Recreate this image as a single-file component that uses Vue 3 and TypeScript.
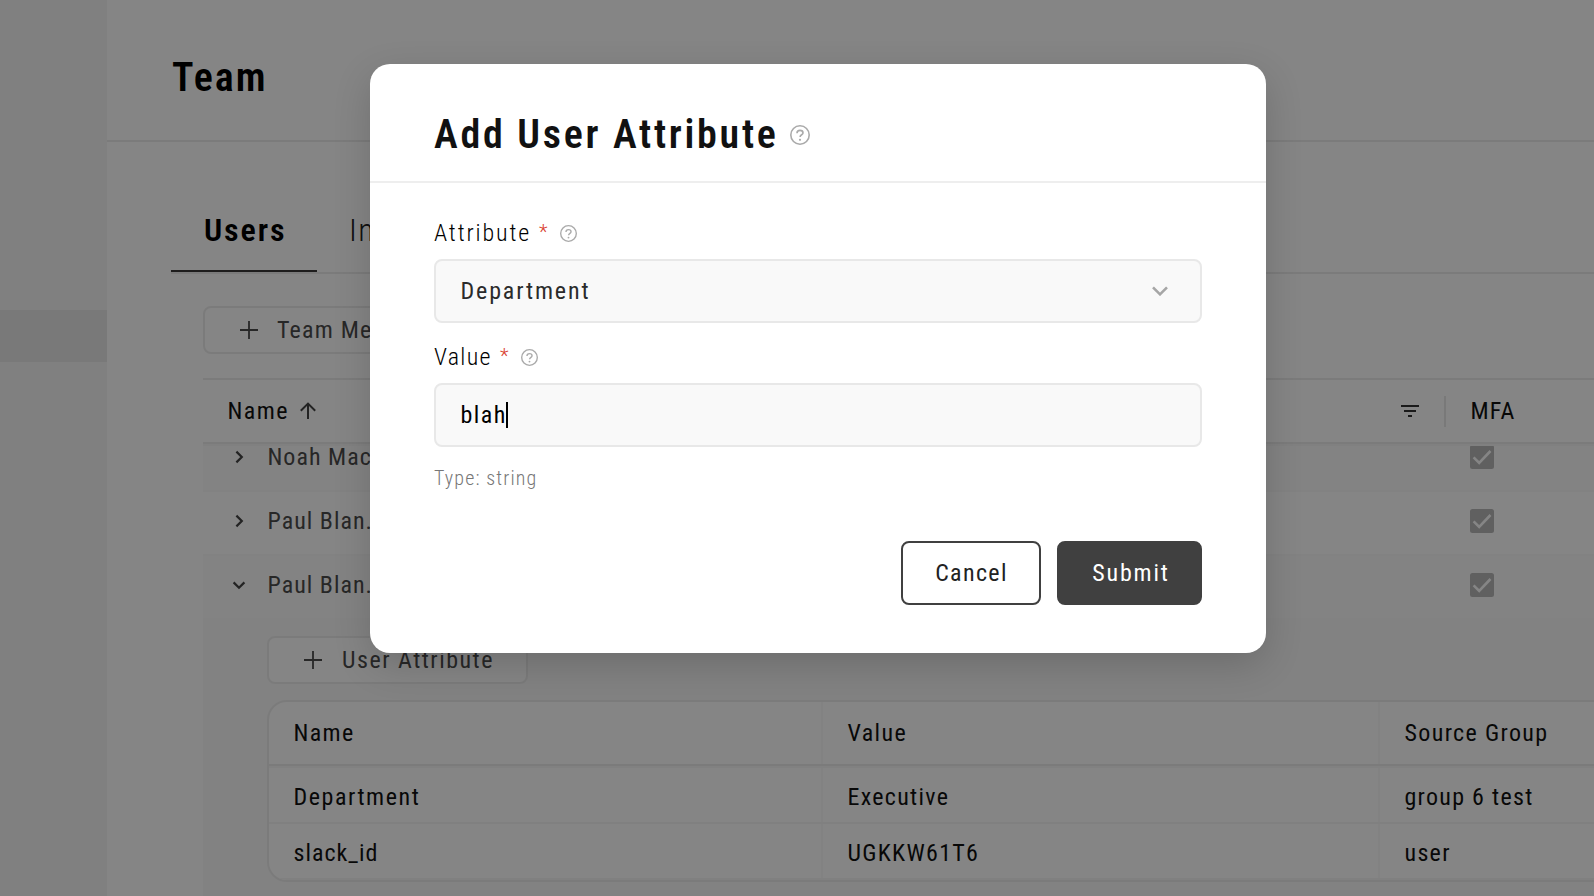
<script setup lang="ts">
interface UserRow { name: string; open: boolean }
interface AttributeRow { name: string; value: string; source: string }

const users: UserRow[] = [
  { name: 'Noah Mac...', open: false },
  { name: 'Paul Blan...', open: false },
  { name: 'Paul Blan...', open: true },
]
const attributes: AttributeRow[] = [
  { name: 'Department', value: 'Executive', source: 'group 6 test' },
  { name: 'slack_id', value: 'UGKKW61T6', source: 'user' },
]
</script>

<template>
  <div class="screen">
    <aside class="sidebar"><div class="active-item"></div></aside>
    <main class="main">
      <header class="page-header"><h1>Team</h1></header>
      <nav class="tabs">
        <span class="tab current">Users</span>
        <span class="tab">Invites</span>
      </nav>
      <section class="content">
        <button class="outline team">
          <svg width="18" height="18" viewBox="0 0 18 18"><path d="M9 0v18M0 9h18" /></svg>
          <span>Team Member</span>
        </button>
        <div class="grid-head">
          <span class="head-name">Name</span>
          <svg class="arrow" width="18" height="18" viewBox="0 0 18 18"><path d="M9 17V2M1.8 8.8 9 1.6l7.2 7.2" /></svg>
          <svg class="filter" width="18" height="14" viewBox="0 0 18 14"><path d="M0 2h18M3 7h12M7 12h4" /></svg>
          <span class="sep"></span>
          <span class="head-mfa">MFA</span>
        </div>
        <div class="grid-body">
          <div class="rows">
            <div v-for="(u, i) in users" :key="i" class="row" :class="{ alt: i % 2 === 0 }">
              <svg class="chev" width="14" height="14" viewBox="0 0 14 14">
                <path :d="u.open ? 'M1.6 4.4 7 9.8l5.4-5.4' : 'M4.4 1.6 9.8 7l-5.4 5.4'" />
              </svg>
              <span class="user-name">{{ u.name }}</span>
              <svg class="check" width="24" height="24" viewBox="0 0 24 24">
                <rect width="24" height="24" rx="2.5" /><path d="m3.6 12.3 5.6 5.6L20.5 6" />
              </svg>
            </div>
          </div>
          <div class="panel">
            <button class="outline">
              <svg width="18" height="18" viewBox="0 0 18 18"><path d="M9 0v18M0 9h18" /></svg>
              <span>User Attribute</span>
            </button>
            <div class="table">
              <div class="tr th"><span>Name</span><span>Value</span><span>Source Group</span></div>
              <div v-for="a in attributes" :key="a.name" class="tr">
                <span :class="a.name.includes('_') ? 'key' : 'label'">{{ a.name }}</span><span>{{ a.value }}</span><span>{{ a.source }}</span>
              </div>
            </div>
          </div>
        </div>
      </section>
    </main>

    <div class="overlay">
      <div class="modal">
        <div class="modal-head">
          <h2>Add User Attribute</h2>
          <svg class="help" width="20" height="20" viewBox="0 0 20 20">
            <circle cx="10" cy="10" r="9.2" /><path d="M7 8.2c0-1.7 1.3-2.8 3-2.8s3 1 3 2.5c0 2-2.9 1.8-2.9 4.1" /><circle class="dot" cx="10" cy="14.8" r="1.1" />
          </svg>
        </div>
        <div class="modal-body">
          <label class="lbl"><span class="l-attr">Attribute</span><b>*</b>
            <svg class="help" width="17" height="17" viewBox="0 0 20 20">
              <circle cx="10" cy="10" r="9.2" /><path d="M7 8.2c0-1.7 1.3-2.8 3-2.8s3 1 3 2.5c0 2-2.9 1.8-2.9 4.1" /><circle class="dot" cx="10" cy="14.8" r="1.1" />
            </svg>
          </label>
          <div class="field select"><span>Department</span>
            <svg width="16" height="10" viewBox="0 0 16 10"><path d="m1 1.3 7 7 7-7" /></svg>
          </div>
          <label class="lbl"><span class="l-val">Value</span><b>*</b>
            <svg class="help" width="17" height="17" viewBox="0 0 20 20">
              <circle cx="10" cy="10" r="9.2" /><path d="M7 8.2c0-1.7 1.3-2.8 3-2.8s3 1 3 2.5c0 2-2.9 1.8-2.9 4.1" /><circle class="dot" cx="10" cy="14.8" r="1.1" />
            </svg>
          </label>
          <div class="field input"><span>blah</span><i class="caret"></i></div>
          <p class="hint">Type: string</p>
          <div class="actions">
            <button class="cancel">Cancel</button>
            <button class="submit">Submit</button>
          </div>
        </div>
      </div>
    </div>
  </div>
</template>

<style>
body { margin: 0; overflow: hidden; }
</style>

<style scoped>
.screen {
  position: relative; display: flex; width: 1594px; height: 896px; overflow: hidden; background: #fff;
  font-family: Roboto, "Liberation Sans", sans-serif; font-stretch: 75%; font-size: 24px; line-height: 32px; letter-spacing: 1.5px; color: #111;
  white-space: nowrap;
}
.screen *, .screen { box-sizing: border-box; }
button { font: inherit; font-stretch: 75%; letter-spacing: inherit; margin: 0; }
svg { display: block; flex: none; fill: none; stroke: currentColor; stroke-width: 2; }
.sidebar { width: 107px; background: #f5f5f5; padding-top: 310px; flex: none; }
.active-item { height: 52px; background: #e8e8e8; }
.main { flex: 1; min-width: 0; overflow: hidden; }
.page-header { height: 142px; border-bottom: 2px solid #ececec; padding: 54px 0 0 65px; }
h1, h2 { margin: 0; font-size: 40px; line-height: 48px; font-weight: 560; letter-spacing: 2px; color: #000; }
.tabs { display: flex; margin: 61px 0 0 64px; height: 71px; border-bottom: 2px solid #ececec; font-size: 32px; }
.tab { height: 69px; padding: 11px 32px 0; line-height: 32px; border-bottom: 2px solid transparent; font-weight: 300; color: #222; }
.tab.current { width: 146px; padding-left: 33px; font-weight: 560; color: #000; border-color: #3a3838; letter-spacing: 1.9px; }
.content { padding: 32px 0 0 96px; }
.outline { display: flex; align-items: center; height: 48px; padding: 0 32px 0 35px; gap: 20px; border: 2px solid #ececec; border-radius: 8px; background: #fff; color: #4c4c4c; }
.outline.team { gap: 19px; letter-spacing: 1.2px; }
.panel .outline { width: 261px; }
.outline svg { stroke-width: 1.8; }
.grid-head { margin-top: 24px; height: 66px; border: solid #ececec; border-width: 2px 0; display: flex; align-items: center; color: #111; }
.head-name { margin-left: 24.5px; width: 71.5px; letter-spacing: 1.4px; }
.arrow { color: #444; }
.filter { margin-left: 1084px; color: #333; }
.sep { width: 2px; height: 31px; margin-left: 25px; background: #e8e8e8; }
.head-mfa { margin-left: 24.5px; letter-spacing: 1.1px; }
.grid-body { border-top: 2px solid #f5f5f5; overflow: hidden; }
.rows { margin-top: -20px; }
.row { display: flex; align-items: center; height: 64px; padding: 0 0 4px 29px; border-top: 2px solid #fafafa; background: #fff; color: #4c4c4c; }
.row.alt { background: #fbfbfb; }
.chev { color: #444; stroke-width: 2.2; }
.user-name { margin-left: 21.5px; width: 1202.5px; letter-spacing: 1px; }
.check rect { fill: #b8b8b8; stroke: none; }
.check path { stroke: #fff; stroke-width: 2.6; }
.panel { background: #f9f9f9; padding: 18px 0 0 64px; height: 278px; }
.table { margin-top: 16px; width: 1700px; height: 182px; border: 2px solid #ececec; border-radius: 20px; background: #fff; overflow: hidden; }
.tr { display: grid; grid-template-columns: 554px 557px 1fr; height: 56px; border-bottom: 2px solid #f6f6f6; align-items: center; }
.tr.th { height: 64px; border-bottom: 2px solid #ececec; }
.tr.th + .tr { height: 58px; border-top: 2px solid #f8f8f8; }
.tr span { padding: 4px 24.5px 0; height: 100%; display: flex; align-items: center; border-right: 2px solid #f9f9f9; letter-spacing: 1.28px; }
.tr.th span { padding-top: 0; letter-spacing: 1.35px; }
.tr .label { letter-spacing: 1.55px; }
.tr .key { letter-spacing: 1px; }

.overlay { position: absolute; inset: 0; background: rgba(0, 0, 0, .478); padding: 64px 0 0 370px; }
.modal { width: 896px; height: 589px; border-radius: 20px; background: #fff; box-shadow: 0 12px 38px -2px rgba(0, 0, 0, .18); }
.modal-head { height: 119px; border-bottom: 2px solid #eee; padding: 25px 0 0 64px; display: flex; align-items: center; gap: 11px; }
.help { color: #aaa; stroke-width: 1.6; }
.help .dot { fill: currentColor; stroke: none; }
.modal-head h2 { color: #111; letter-spacing: 2.7px; }
.modal-body { padding: 32px 64px 0; }
.lbl { display: flex; align-items: center; height: 44px; padding-bottom: 8px; font-weight: 330; color: #000; }
.lbl .l-attr { letter-spacing: 1.85px; }
.lbl .l-val { letter-spacing: 1.3px; }
.lbl b { font-weight: 300; color: #d9402f; font-size: 20px; width: 9px; margin: 0 12px 3px 8px; letter-spacing: 0; }
.field { height: 64px; border: 2px solid #e8e8e8; border-radius: 8px; background: #f9f9f9; display: flex; align-items: center; padding: 0 32px 0 24.5px; letter-spacing: 1.85px; }
.select { justify-content: space-between; color: #2b2b2b; margin-bottom: 16px; }
.select svg { color: #a6a6a6; stroke-width: 2.6; }
.input { color: #000; letter-spacing: 1.5px; }
.caret { width: 2px; height: 26px; background: #000; margin-left: -1px; }
.hint { margin: 15px 0 0; font-size: 20px; font-weight: 320; color: #777; letter-spacing: 1.13px; }
.actions { display: flex; justify-content: flex-end; gap: 16px; margin-top: 47px; }
.actions button { height: 64px; border: 2px solid #404040; border-radius: 8px; letter-spacing: 1.8px; padding: 0 0 0 3px; }
.actions .cancel { width: 140px; background: #fff; color: #222; letter-spacing: 1.35px; padding-left: 1px; }
.actions .submit { width: 145px; background: #404040; color: #fff; }
</style>
